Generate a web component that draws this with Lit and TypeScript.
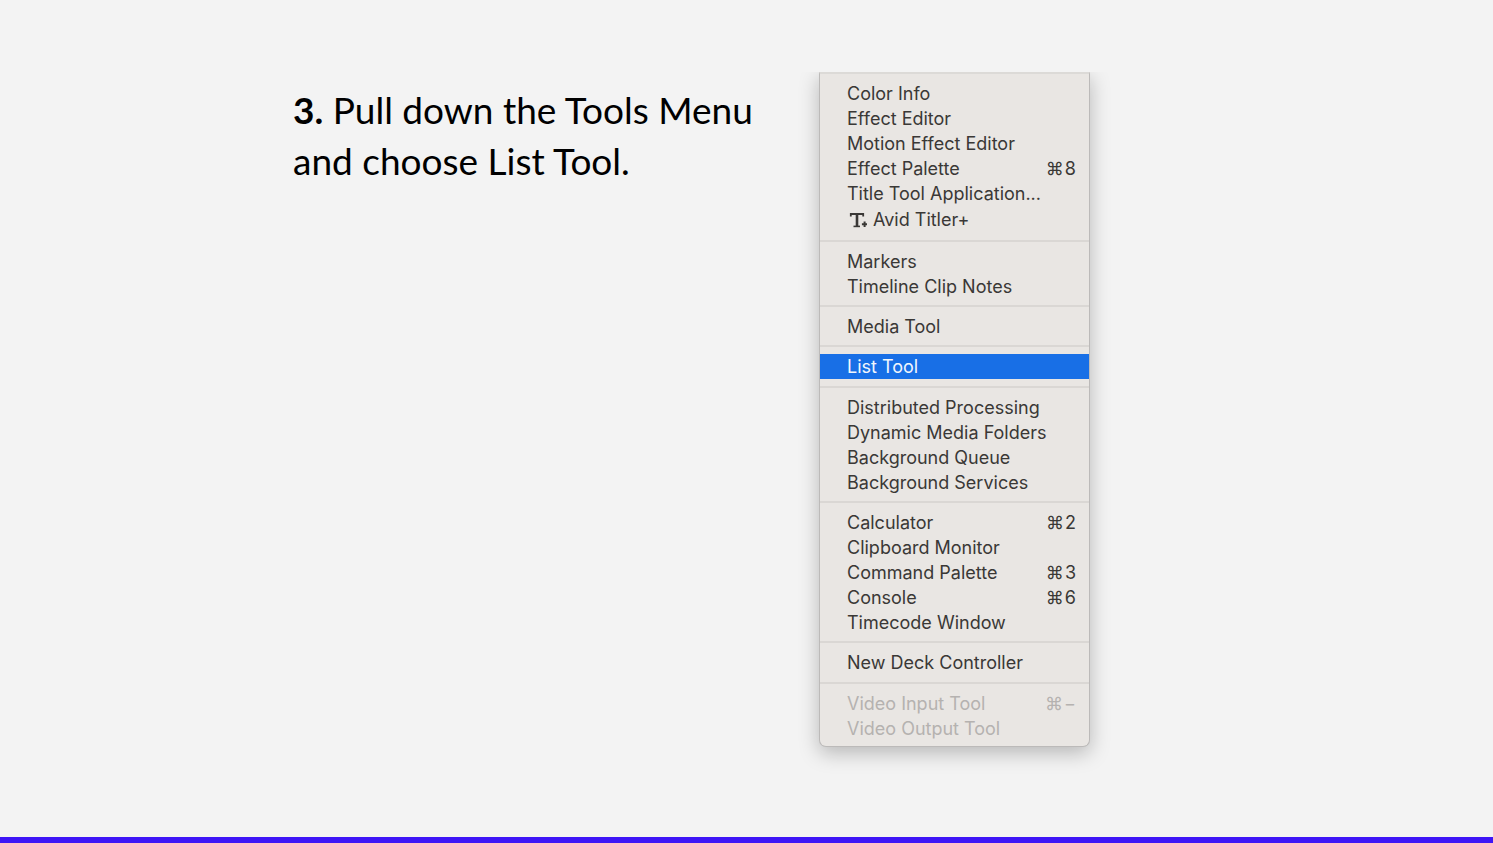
import { LitElement, html, css, svg, nothing } from "lit";
import { customElement } from "lit/decorators.js";
import { classMap } from "lit/directives/class-map.js";

interface MenuItem {
  label: string;
  keys?: string;
  icon?: boolean;
  active?: boolean;
  disabled?: boolean;
}

const GROUPS: MenuItem[][] = [
  [
    { label: "Color Info" },
    { label: "Effect Editor" },
    { label: "Motion Effect Editor" },
    { label: "Effect Palette", keys: "8" },
    { label: "Title Tool Application..." },
    { label: "Avid Titler+", icon: true },
  ],
  [{ label: "Markers" }, { label: "Timeline Clip Notes" }],
  [{ label: "Media Tool" }],
  [{ label: "List Tool", active: true }],
  [
    { label: "Distributed Processing" },
    { label: "Dynamic Media Folders" },
    { label: "Background Queue" },
    { label: "Background Services" },
  ],
  [
    { label: "Calculator", keys: "2" },
    { label: "Clipboard Monitor" },
    { label: "Command Palette", keys: "3" },
    { label: "Console", keys: "6" },
    { label: "Timecode Window" },
  ],
  [{ label: "New Deck Controller" }],
  [
    { label: "Video Input Tool", keys: "−", disabled: true },
    { label: "Video Output Tool", disabled: true },
  ],
];

const titlerIcon = html`<svg class="icon" viewBox="0 0 20 18" aria-hidden="true">
  ${svg`<path d="M3.8 5.6V3H16.2V5.6" fill="none" stroke="currentColor" stroke-width="1.8"/>
  <path d="M10 3V15" fill="none" stroke="currentColor" stroke-width="2.6"/>
  <path d="M6.5 15.4H13" fill="none" stroke="currentColor" stroke-width="1.6"/>
  <path d="M17.6 10.6V16M14.9 13.3H20" fill="none" stroke="currentColor" stroke-width="2"/>`}
</svg>`;

@customElement("tools-menu")
export class ToolsMenu extends LitElement {
  static styles = css`
    :host {
      display: block;
    }
    .menu {
      box-sizing: border-box;
      padding: 7px 0 5px;
      border: 1px solid #bcbab9;
      border-top: 2px solid #dcdad7;
      border-radius: 0 0 7px 7px;
      background: #e9e6e3;
      box-shadow: 0 6px 20px rgba(0, 0, 0, 0.25);
      font-family: Inter, "Liberation Sans", sans-serif;
      font-size: 18px;
      color: #3a3836;
    }
    .group + .group {
      padding-top: 7px;
      border-top: 2px solid #dad7d4;
      margin-top: 6px;
    }
    .group:nth-child(3n + 2) {
      margin-top: 7px;
    }
    .item {
      display: flex;
      align-items: center;
      justify-content: space-between;
      width: 100%;
      height: 25px;
      margin: 0;
      padding: 0 13px 0 27px;
      border: 0;
      background: none;
      color: inherit;
      font: inherit;
      line-height: 25px;
      text-align: left;
      white-space: nowrap;
    }
    .item.tall {
      height: 27px;
    }
    .item.active {
      background: #186fe6;
      color: #f1f6fd;
    }
    .item:disabled {
      color: #b5b2b0;
    }
    .label {
      display: flex;
      align-items: center;
      gap: 6px;
    }
    .icon {
      width: 20px;
      height: 18px;
    }
    .keys {
      display: flex;
      gap: 1px;
    }
  `;

  private renderItem(item: MenuItem) {
    return html`<button
      type="button"
      role="menuitem"
      class=${classMap({ item: true, tall: !!item.icon, active: !!item.active })}
      ?disabled=${item.disabled}
    >
      <span class="label">${item.icon ? titlerIcon : nothing}<span>${item.label}</span></span>
      ${item.keys ? html`<span class="keys"><span>⌘</span><span>${item.keys}</span></span>` : nothing}
    </button>`;
  }

  render() {
    return html`<div class="menu" role="menu" aria-label="Tools">
      ${GROUPS.map(
        (group) => html`<div class="group" role="group">${group.map((item) => this.renderItem(item))}</div>`
      )}
    </div>`;
  }
}

@customElement("app-root")
export class AppRoot extends LitElement {
  static styles = css`
    :host {
      display: flex;
      flex-direction: column;
      box-sizing: border-box;
      min-height: 100vh;
      border-bottom: 6px solid #3e15f6;
      background: #f3f3f3;
      color: #000;
    }
    .step {
      display: grid;
      grid-template-columns: minmax(0, 1fr) 404px;
      width: 100%;
      max-width: 907px;
      margin: 0 auto;
      padding-top: 72px;
    }
    .text {
      margin: 0;
      padding: 12px 24px 0 0;
      font-family: Lato, sans-serif;
      font-size: 37px;
      line-height: 51px;
    }
    .figure {
      margin: 0;
      padding: 0 110px 60px 23px;
      overflow: hidden;
    }
  `;

  render() {
    return html`<main class="step">
      <p class="text"><strong>3.</strong> Pull down the Tools Menu and choose List Tool.</p>
      <figure class="figure"><tools-menu></tools-menu></figure>
    </main>`;
  }
}
